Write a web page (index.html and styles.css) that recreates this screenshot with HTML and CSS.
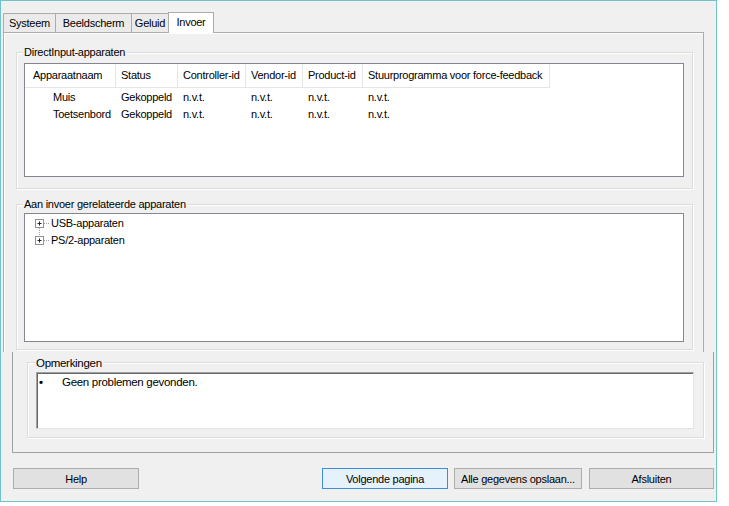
FILE: index.html
```html
<!DOCTYPE html>
<html>
<head>
<meta charset="utf-8">
<link rel="stylesheet" href="styles.css">
</head>
<body>
<div class="window">
  <div class="tabs">
    <div class="tab t1">Systeem</div>
    <div class="tab t2">Beeldscherm</div>
    <div class="tab t3">Geluid</div>
    <div class="tab active t4">Invoer</div>
  </div>
  <div class="panel">
    <div class="group g1">
      <span class="legend">DirectInput-apparaten</span>
      <div class="listview">
        <div class="lv-grid">
          <div class="hd first">Apparaatnaam</div>
          <div class="hd">Status</div>
          <div class="hd">Controller-id</div>
          <div class="hd">Vendor-id</div>
          <div class="hd">Product-id</div>
          <div class="hd">Stuurprogramma voor force-feedback</div>

          <div class="cell first">Muis</div>
          <div class="cell">Gekoppeld</div>
          <div class="cell">n.v.t.</div>
          <div class="cell">n.v.t.</div>
          <div class="cell">n.v.t.</div>
          <div class="cell">n.v.t.</div>

          <div class="cell first">Toetsenbord</div>
          <div class="cell">Gekoppeld</div>
          <div class="cell">n.v.t.</div>
          <div class="cell">n.v.t.</div>
          <div class="cell">n.v.t.</div>
          <div class="cell">n.v.t.</div>
        </div>
      </div>
    </div>
    <div class="group g2">
      <span class="legend">Aan invoer gerelateerde apparaten</span>
      <div class="tree">
        <div class="node">
          <svg class="expander" width="18" height="17" viewBox="0 0 18 17">
            <rect x="4.5" y="4.5" width="8" height="8" fill="#fff" stroke="#919191"/>
            <path d="M6.5 8.5h4M8.5 6.5v4" stroke="#222" stroke-width="1"/>
            <path d="M13 8.5h5" stroke="#a0a0a0" stroke-dasharray="1 1"/>
            <path d="M8.5 13v4" stroke="#a0a0a0" stroke-dasharray="1 1"/>
          </svg>
          <span>USB-apparaten</span>
        </div>
        <div class="node">
          <svg class="expander" width="18" height="17" viewBox="0 0 18 17">
            <path d="M8.5 0v4" stroke="#a0a0a0" stroke-dasharray="1 1"/>
            <rect x="4.5" y="4.5" width="8" height="8" fill="#fff" stroke="#919191"/>
            <path d="M6.5 8.5h4M8.5 6.5v4" stroke="#222" stroke-width="1"/>
            <path d="M13 8.5h5" stroke="#a0a0a0" stroke-dasharray="1 1"/>
          </svg>
          <span>PS/2-apparaten</span>
        </div>
      </div>
    </div>
  </div>
  <div class="lower">
    <div class="group g3">
      <span class="legend">Opmerkingen</span>
      <div class="notes">
        <div class="note"><span class="bullet">•</span><span>Geen problemen gevonden.</span></div>
      </div>
    </div>
  </div>
  <div class="buttons">
    <button class="btn b-help">Help</button>
    <button class="btn b-next default">Volgende pagina</button>
    <button class="btn b-save">Alle gegevens opslaan...</button>
    <button class="btn b-close">Afsluiten</button>
  </div>
</div>
</body>
</html>
```
FILE: styles.css
```css
html, body {
  margin: 0;
  padding: 0;
  background: #ffffff;
}

body {
  font-family: "Liberation Sans", Arial, sans-serif;
  font-size: 11px;
  letter-spacing: -0.25px;
  color: #000;
}

.window {
  width: 717px;
  height: 502px;
  box-sizing: border-box;
  border: 1px solid #6fc3c9;
  background: #f0f0f0;
}

/* Tabs */
.tabs {
  display: flex;
  align-items: flex-end;
  height: 31px;
  margin-left: 2px;
}

.tab {
  box-sizing: border-box;
  height: 19px;
  border: 1px solid #acacac;
  border-bottom: none;
  margin-right: -1px;
  background: #ebebeb;
  display: flex;
  align-items: center;
  justify-content: center;
  line-height: 13px;
  padding-top: 1px;
}

.t1 { width: 53px; }
.t2 { width: 77px; }
.t3 { width: 38px; }
.t4 { width: 46px; }

.tab.active {
  height: 21px;
  background: #ffffff;
  margin-bottom: -1px;
  position: relative;
  z-index: 1;
  padding-top: 0;
  padding-bottom: 2px;
}

/* Panel */
.panel {
  box-sizing: border-box;
  margin-left: 2px;
  width: 701px;
  height: 320px;
  border: 1px solid #acacac;
  border-bottom: none;
  background: #f0f0f0;
  padding-top: 19px;
  padding-left: 12px;
  box-shadow: inset 1px 1px 0 #ffffff;
}

.group {
  box-sizing: border-box;
  border: 1px solid #dcdcdc;
  box-shadow: inset 1px 1px 0 #ffffff, 1px 1px 0 #ffffff;
}

.legend {
  display: block;
  width: fit-content;
  height: 13px;
  line-height: 13px;
  margin-top: -7px;
  margin-left: -1px;
  padding: 0 2px 0 1px;
  background: #f0f0f0;
}

.g1 {
  width: 677px;
  height: 137px;
  padding-left: 7px;
}

.listview {
  box-sizing: border-box;
  margin-top: 4px;
  width: 660px;
  height: 114px;
  border: 1px solid #828790;
  background: #ffffff;
}

.lv-grid {
  display: grid;
  grid-template-columns: 91px 62px 68px 57px 60px 187px;
  grid-template-rows: 25px 17px 17px;
}

.hd {
  box-sizing: border-box;
  height: 24px;
  line-height: 22px;
  padding-left: 5px;
  border-right: 1px solid #e5e5e5;
  border-bottom: 1px solid #e5e5e5;
  white-space: nowrap;
}

.hd.first {
  padding-left: 8px;
}

.cell {
  line-height: 17px;
  padding-left: 5px;
  white-space: nowrap;
}

.cell.first {
  padding-left: 28px;
}

.g2 {
  margin-top: 15px;
  width: 677px;
  height: 146px;
  padding-left: 7px;
}

.tree {
  box-sizing: border-box;
  margin-top: 2px;
  width: 660px;
  height: 129px;
  border: 1px solid #828790;
  background: #ffffff;
  padding-top: 1px;
  padding-left: 6px;
}

.node {
  display: flex;
  align-items: center;
  height: 17px;
}

.expander {
  display: block;
  flex: none;
  margin-right: 2px;
}

.node span {
  line-height: 17px;
}

/* Lower section */
.lower {
  box-sizing: border-box;
  margin-left: 11px;
  width: 702px;
  height: 101px;
  border: 1px solid #a0a0a0;
  border-top: none;
  padding-top: 10px;
  padding-left: 14px;
  background: #f0f0f0;
}

.g3 {
  width: 677px;
  height: 76px;
  padding-left: 8px;
  font-size: 11.5px;
  letter-spacing: -0.3px;
}

.g3 .legend {
  height: 14px;
  line-height: 14px;
  margin-top: -7px;
}

.notes {
  box-sizing: border-box;
  margin-top: 2px;
  width: 658px;
  height: 57px;
  background: #ffffff;
  border: 1px solid;
  border-color: #a0a0a0 #e3e3e3 #e3e3e3 #a0a0a0;
  box-shadow: inset 1px 1px 0 #696969;
  padding-top: 2px;
  padding-left: 2px;
}

.note {
  display: flex;
  line-height: 15px;
}

.bullet {
  width: 23px;
  font-weight: bold;
}

/* Buttons */
.buttons {
  display: flex;
  margin-top: 15px;
  padding-left: 12px;
}

.btn {
  box-sizing: border-box;
  height: 21px;
  border: 1px solid #adadad;
  background: #e1e1e1;
  font-family: "Liberation Sans", Arial, sans-serif;
  font-size: 11px;
  letter-spacing: -0.25px;
  color: #000;
  padding: 0;
  margin: 0;
}

.btn.default {
  border-color: #3c8fd7;
  background: #e5f1fb;
}

.b-help { width: 126px; }
.b-next { width: 126px; margin-left: 183px; }
.b-save { width: 128px; margin-left: 6px; }
.b-close { width: 125px; margin-left: 7px; }
```
